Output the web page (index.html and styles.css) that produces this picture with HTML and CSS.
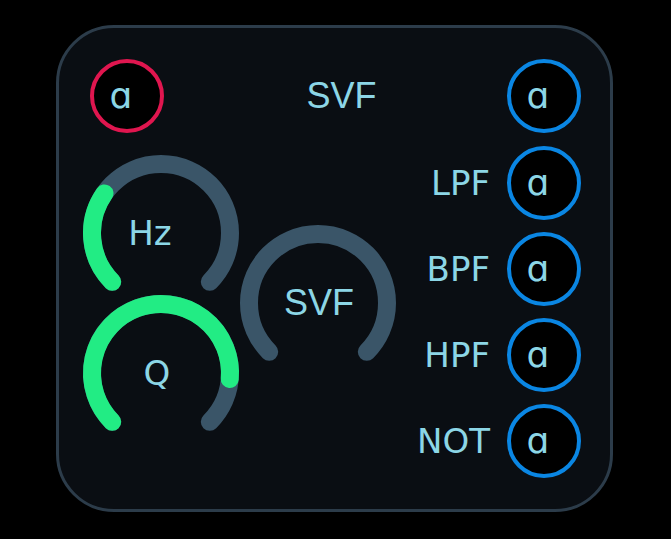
FILE: index.html
```html
<!DOCTYPE html>
<html>
<head>
<meta charset="utf-8">
<link rel="stylesheet" href="styles.css">
</head>
<body>
<div class="panel">
  <div class="header">
    <div class="port port-red"><span class="glyph">ɑ</span></div>
    <div class="title">SVF</div>
    <div class="port port-blue"><span class="glyph">ɑ</span></div>
  </div>
  <div class="body">
    <div class="knobs">
      <div class="knob knob-hz">
        <svg class="dial" width="156" height="156" viewBox="0 0 156 156">
          <path class="track" d="M 29.21 126.79 A 69 69 0 1 1 126.79 126.79"/>
          <path class="value" d="M 29.21 126.79 A 69 69 0 0 1 21.48 38.42"/>
        </svg>
        <span class="knob-label label-hz">Hz</span>
      </div>
      <div class="knob knob-svf">
        <svg class="dial" width="156" height="156" viewBox="0 0 156 156">
          <path class="track" d="M 29.21 126.79 A 69 69 0 1 1 126.79 126.79"/>
        </svg>
        <span class="knob-label label-svf">SVF</span>
      </div>
      <div class="knob knob-q">
        <svg class="dial" width="156" height="156" viewBox="0 0 156 156">
          <path class="track" d="M 29.21 126.79 A 69 69 0 1 1 126.79 126.79"/>
          <path class="value" d="M 29.21 126.79 A 69 69 0 1 1 146.74 84.01"/>
        </svg>
        <span class="knob-label label-q">Q</span>
      </div>
    </div>
    <div class="outputs">
      <div class="out-row"><span class="out-label">LPF</span><div class="port port-blue"><span class="glyph">ɑ</span></div></div>
      <div class="out-row"><span class="out-label">BPF</span><div class="port port-blue"><span class="glyph">ɑ</span></div></div>
      <div class="out-row"><span class="out-label">HPF</span><div class="port port-blue"><span class="glyph">ɑ</span></div></div>
      <div class="out-row"><span class="out-label">NOT</span><div class="port port-blue"><span class="glyph">ɑ</span></div></div>
    </div>
  </div>
</div>
</body>
</html>
```

FILE: styles.css
```css
* { box-sizing: border-box; }

html, body {
  margin: 0;
  padding: 0;
  background: #000;
}

body {
  width: 671px;
  height: 539px;
  padding: 25px 0 0 56px;
  font-family: "DejaVu Sans", sans-serif;
  color: #8cd6e6;
}

.panel {
  width: 557px;
  height: 487px;
  background: #0a0e13;
  border: 3px solid #2c3c4a;
  border-radius: 58px;
  display: flex;
  flex-direction: column;
}

.header {
  display: flex;
  align-items: center;
  padding: 31px 29px 0 31px;
}

.title {
  flex: 1;
  text-align: center;
  padding-left: 12px;
  font-family: "Liberation Sans", sans-serif;
  font-size: 36px;
  line-height: 1;
}

.port {
  width: 74px;
  height: 74px;
  border-radius: 50%;
  border: 4px solid;
  background: #000;
  display: flex;
  align-items: center;
  justify-content: center;
  padding-right: 12px;
  flex: none;
}

.port-red { border-color: #e0164f; }
.port-blue { border-color: #0a86e3; }

.glyph {
  font-size: 36px;
  line-height: 1;
}

.body {
  display: flex;
  justify-content: space-between;
  align-items: flex-start;
  padding: 0 29px 0 24px;
}

.knobs {
  display: grid;
  grid-template-columns: 157px 156px;
  margin-top: 22px;
}

.knob {
  display: grid;
  width: 156px;
  height: 156px;
}

.knob > * {
  grid-area: 1 / 1;
}

.knob-hz { grid-column: 1; grid-row: 1; }
.knob-q { grid-column: 1; grid-row: 2; margin-top: -16px; }
.knob-svf { grid-column: 2; grid-row: 1 / span 2; margin-top: 70px; align-self: start; }

.dial { overflow: visible; }

.track, .value {
  fill: none;
  stroke-width: 18;
  stroke-linecap: round;
}

.track { stroke: #3a5568; }
.value { stroke: #22ec84; }

.knob-label {
  place-self: center;
  font-size: 34px;
  line-height: 1;
}

.label-hz { margin-right: 22px; }
.label-q { margin-right: 8px; }
.label-svf {
  font-family: "Liberation Sans", sans-serif;
  font-size: 36px;
  margin-left: 2px;
}

.outputs {
  display: flex;
  flex-direction: column;
  gap: 12px;
  margin-top: 13px;
}

.out-row {
  display: flex;
  align-items: center;
  justify-content: flex-end;
  gap: 17px;
}

.out-label {
  font-size: 34px;
  line-height: 1;
}
```
